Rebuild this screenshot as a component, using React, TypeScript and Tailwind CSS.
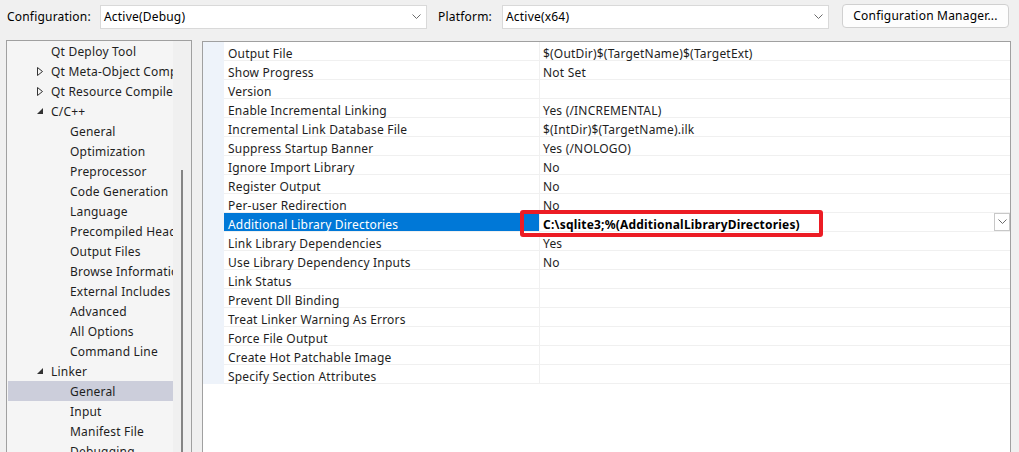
import React from "react";

const Chevron = ({ cls = "" }: { cls?: string }) => (
  <svg width="9" height="6" viewBox="0 0 9 6" className={cls}>
    <polyline points="0.5,0.5 4.5,4.5 8.5,0.5" fill="none" stroke="#6b6b6b" strokeWidth="1" />
  </svg>
);

const Collapsed = () => (
  <svg width="6" height="9" viewBox="0 0 6 9" className="absolute left-[29px] top-[6px]">
    <polygon points="0.5,0.5 5.5,4.5 0.5,8.5" fill="none" stroke="#333" strokeWidth="1" />
  </svg>
);

const Expanded = () => (
  <svg width="6" height="6" viewBox="0 0 6 6" className="absolute left-[29px] top-[7px]">
    <polygon points="6,0 6,6 0,6" fill="#333" />
  </svg>
);

type TreeItem = { label: string; level: 1 | 2; arrow?: "c" | "e"; selected?: boolean };

const tree: TreeItem[] = [
  { label: "Qt Deploy Tool", level: 1 },
  { label: "Qt Meta-Object Compiler", level: 1, arrow: "c" },
  { label: "Qt Resource Compiler", level: 1, arrow: "c" },
  { label: "C/C++", level: 1, arrow: "e" },
  { label: "General", level: 2 },
  { label: "Optimization", level: 2 },
  { label: "Preprocessor", level: 2 },
  { label: "Code Generation", level: 2 },
  { label: "Language", level: 2 },
  { label: "Precompiled Headers", level: 2 },
  { label: "Output Files", level: 2 },
  { label: "Browse Information", level: 2 },
  { label: "External Includes", level: 2 },
  { label: "Advanced", level: 2 },
  { label: "All Options", level: 2 },
  { label: "Command Line", level: 2 },
  { label: "Linker", level: 1, arrow: "e" },
  { label: "General", level: 2, selected: true },
  { label: "Input", level: 2 },
  { label: "Manifest File", level: 2 },
  { label: "Debugging", level: 2 },
];

const rows: [string, string][] = [
  ["Output File", "$(OutDir)$(TargetName)$(TargetExt)"],
  ["Show Progress", "Not Set"],
  ["Version", ""],
  ["Enable Incremental Linking", "Yes (/INCREMENTAL)"],
  ["Incremental Link Database File", "$(IntDir)$(TargetName).ilk"],
  ["Suppress Startup Banner", "Yes (/NOLOGO)"],
  ["Ignore Import Library", "No"],
  ["Register Output", "No"],
  ["Per-user Redirection", "No"],
  ["Additional Library Directories", "C:\\sqlite3;%(AdditionalLibraryDirectories)"],
  ["Link Library Dependencies", "Yes"],
  ["Use Library Dependency Inputs", "No"],
  ["Link Status", ""],
  ["Prevent Dll Binding", ""],
  ["Treat Linker Warning As Errors", ""],
  ["Force File Output", ""],
  ["Create Hot Patchable Image", ""],
  ["Specify Section Attributes", ""],
];

export default function App() {
  return (
    <div className="relative w-[1019px] h-[452px] overflow-hidden bg-[#f0f0f0] text-[12px] leading-none tracking-[0.2px] text-[#1e1e1e] font-['Noto_Sans',sans-serif]">
      {/* Top bar */}
      <div className="flex items-center h-[32px] pt-px">
        <div className="w-[100px] pl-[7px] text-black">Configuration:</div>
        <div className="w-[327px] h-[24px] flex items-center justify-between border border-[#d9d9d9] bg-white pl-[3px] pr-[5px] text-black">
          <span>Active(Debug)</span>
          <Chevron />
        </div>
        <div className="w-[75px] pl-[11px] text-black">Platform:</div>
        <div className="w-[327px] h-[24px] flex items-center justify-between border border-[#d9d9d9] bg-white pl-[3px] pr-[5px] text-black">
          <span>Active(x64)</span>
          <Chevron />
        </div>
        <div className="ml-[13px] w-[167px] h-[24px] -mt-[2px] flex items-center justify-center rounded-[4px] border border-[#d0d0d0] bg-[#fdfdfd] text-black">
          Configuration Manager...
        </div>
      </div>

      {/* Main */}
      <div className="flex mt-[8px]">
        {/* Tree panel */}
        <div className="ml-[6px] w-[186px] h-[420px] flex border border-[#a0a0a0] bg-[#f5f5f5]">
          <div className="w-[166px] pl-px overflow-hidden">
            {tree.map((t, i) => (
              <div
                key={i}
                className={`relative h-[20px] flex items-center pt-px whitespace-nowrap ${t.selected ? "bg-[#cccedb]" : ""} ${t.level === 1 ? "pl-[43px]" : "pl-[62px]"}`}
              >
                {t.arrow === "c" && <Collapsed />}
                {t.arrow === "e" && <Expanded />}
                <span>{t.label}</span>
              </div>
            ))}
          </div>
          <div className="w-[18px] bg-[#f0f0f0] pt-[129px] pl-[8px]">
            <div className="w-[2px] h-full bg-[#858585]" />
          </div>
        </div>

        {/* Property grid */}
        <div className="ml-[10px] mt-px w-[809px] h-[420px] border border-[#a0a0a0] bg-white">
          <div className="flex">
            <div className="w-[21px] bg-[#eef3fa]" />
            <div className="flex-1">
              {rows.map(([name, value], i) => {
                const sel = i === 9;
                return (
                  <div key={i} className="flex h-[19px] border-b border-[#f0f0f0]">
                    <div
                      className={`w-[315px] pl-[4px] pt-[5px] flex items-center whitespace-nowrap ${sel ? "bg-[#0078d7] text-white" : ""}`}
                    >
                      {name}
                    </div>
                    <div className="w-px bg-[#f0f0f0]" />
                    <div className="flex-1 pl-[3px] flex items-center justify-between whitespace-nowrap">
                      <span className={`pt-[5px] ${sel ? "font-bold text-black" : ""}`}>{value}</span>
                      {sel && (
                        <div className="w-[16px] h-[18px] flex items-center justify-center border border-[#c8c8c8] bg-white">
                          <Chevron />
                        </div>
                      )}
                    </div>
                  </div>
                );
              })}
            </div>
          </div>
        </div>
      </div>

      {/* Red annotation box */}
      <div className="absolute left-[520px] top-[210px] w-[303px] h-[27px] border-[4px] border-[#ec1c24] rounded-[3px]" />
    </div>
  );
}
